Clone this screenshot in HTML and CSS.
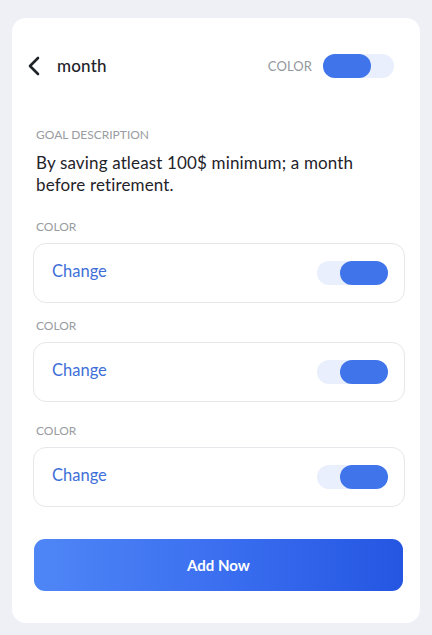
FILE: index.html
```html
<!DOCTYPE html>
<html>
<head>
<meta charset="utf-8">
<link rel="stylesheet" href="styles.css">
</head>
<body>
<div class="card">
  <div class="header">
    <div class="back">
      <svg width="14" height="20" viewBox="0 0 14 20"><path d="M11 2 L3 10 L11 18" fill="none" stroke="#1f2329" stroke-width="2.6" stroke-linecap="round" stroke-linejoin="round"/></svg>
    </div>
    <div class="title">month</div>
    <div class="spacer"></div>
    <div class="hlabel">COLOR</div>
    <div class="toggle toggle-left"><span class="knob"></span></div>
  </div>

  <div class="label goal">GOAL DESCRIPTION</div>
  <div class="desc">By saving atleast 100$ minimum; a month before retirement.</div>

  <div class="label first">COLOR</div>
  <div class="box"><span class="change">Change</span><div class="toggle toggle-right"><span class="knob"></span></div></div>

  <div class="label second">COLOR</div>
  <div class="box"><span class="change">Change</span><div class="toggle toggle-right"><span class="knob"></span></div></div>

  <div class="label third">COLOR</div>
  <div class="box"><span class="change">Change</span><div class="toggle toggle-right"><span class="knob"></span></div></div>

  <button class="add">Add Now</button>
</div>
</body>
</html>
```
FILE: styles.css
```css
* { box-sizing: border-box; }
html, body { margin: 0; padding: 0; }
body {
  background: #eef0f5;
  font-family: Lato, "Open Sans", sans-serif;
  width: 432px;
  height: 635px;
  padding-top: 18px;
}
.card {
  margin: 0 12px;
  width: 408px;
  height: 605px;
  background: #fff;
  border-radius: 14px;
  padding: 37px 15px 0 21px;
  display: flex;
  flex-direction: column;
}
.header {
  display: flex;
  align-items: center;
  height: 24px;
  padding-right: 11px;
  margin-top: -1px;
}
.back { width: 24px; margin-left: -6px; display: flex; align-items: center; }
.title { font-size: 17px; color: #1f2329; margin-left: 6px; font-weight: 500; letter-spacing: 0.2px; margin-top: -2px; }
.spacer { flex: 1; }
.hlabel { font-size: 13px; color: #94979c; margin-right: 11px; letter-spacing: 0.1px; font-weight: 400; }
.toggle {
  width: 71px;
  height: 24px;
  border-radius: 12px;
  background: #e9effc;
  display: flex;
}
.toggle-right { justify-content: flex-end; }
.knob {
  width: 48px;
  height: 24px;
  border-radius: 12px;
  background: #3f74ea;
}
.label {
  font-size: 12px;
  line-height: 16px;
  color: #999ca1;
  padding-left: 3px;
  font-weight: 400;
}
.goal { margin-top: 49px; }
.desc {
  font-size: 17px;
  line-height: 22px;
  color: #1f2329;
  padding-left: 3px;
  margin-top: 9px;
  max-width: 345px;
  letter-spacing: 0.15px;
}
.first { margin-top: 23px; }
.second { margin-top: 15px; }
.third { margin-top: 21px; }
.box {
  margin-top: 8px;
  height: 60px;
  border: 1.5px solid #e6e7ea;
  border-radius: 13px;
  display: flex;
  align-items: center;
  justify-content: space-between;
  padding: 0 16px 0 18px;
}
.change { font-size: 16.5px; color: #3e6fd8; margin-top: -5px; }
.add {
  margin-top: 32px;
  margin-left: 1px;
  width: 369px;
  height: 52px;
  border: none;
  border-radius: 11px;
  background: linear-gradient(90deg, #4f86f6 0%, #3b6ff0 50%, #2456e2 100%);
  color: #fff;
  font-family: Lato, sans-serif;
  font-weight: 700;
  font-size: 15px;
}
```
